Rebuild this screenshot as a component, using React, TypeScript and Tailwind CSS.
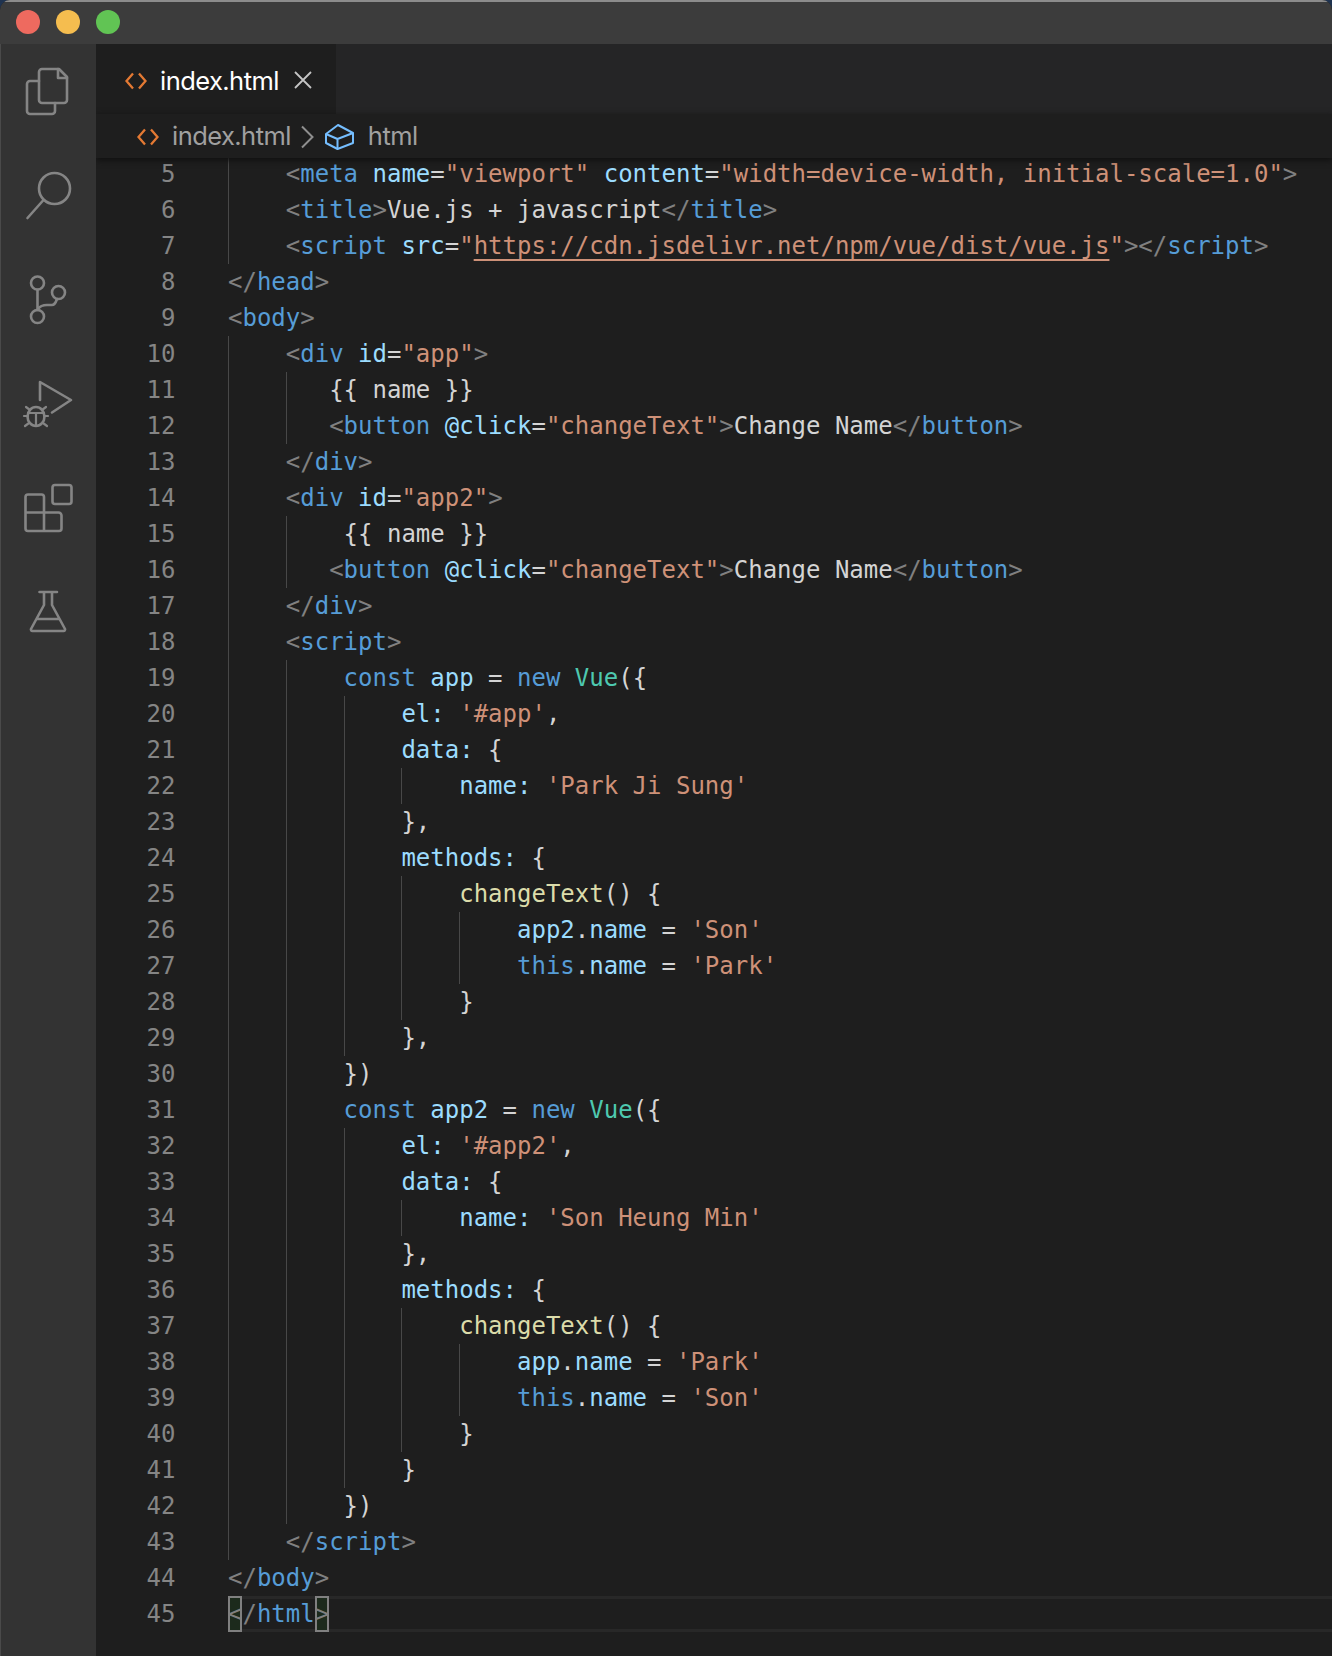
import React from "react";

const colors = {
  b: "text-[#808080]",
  t: "text-[#569cd6]",
  a: "text-[#9cdcfe]",
  s: "text-[#ce9178]",
  x: "text-[#d4d4d4]",
  f: "text-[#dcdcaa]",
  c: "text-[#4ec9b0]",
  u: "text-[#ce9178] underline decoration-2 underline-offset-[5px]",
  m: "text-[#808080] inline-block h-9 bg-[#1c2a1c] shadow-[inset_0_0_0_2px_#808080]",
};

type Kind = keyof typeof colors;
type Line = { n: number; guides: number[]; parts: [Kind, string][]; current?: boolean };

const lines: Line[] = [
  { n: 5, guides: [4], parts: [["b", "<"], ["t", "meta"], ["x", " "], ["a", "name"], ["x", "="], ["s", '"viewport"'], ["x", " "], ["a", "content"], ["x", "="], ["s", '"width=device-width, initial-scale=1.0"'], ["b", ">"]] },
  { n: 6, guides: [4], parts: [["b", "<"], ["t", "title"], ["b", ">"], ["x", "Vue.js + javascript"], ["b", "</"], ["t", "title"], ["b", ">"]] },
  { n: 7, guides: [4], parts: [["b", "<"], ["t", "script"], ["x", " "], ["a", "src"], ["x", "="], ["s", '"'], ["u", "https://cdn.jsdelivr.net/npm/vue/dist/vue.js"], ["s", '"'], ["b", "></"], ["t", "script"], ["b", ">"]] },
  { n: 8, guides: [], parts: [["b", "</"], ["t", "head"], ["b", ">"]] },
  { n: 9, guides: [], parts: [["b", "<"], ["t", "body"], ["b", ">"]] },
  { n: 10, guides: [4], parts: [["b", "<"], ["t", "div"], ["x", " "], ["a", "id"], ["x", "="], ["s", '"app"'], ["b", ">"]] },
  { n: 11, guides: [4, 3], parts: [["x", "{{ name }}"]] },
  { n: 12, guides: [4, 3], parts: [["b", "<"], ["t", "button"], ["x", " "], ["a", "@click"], ["x", "="], ["s", '"changeText"'], ["b", ">"], ["x", "Change Name"], ["b", "</"], ["t", "button"], ["b", ">"]] },
  { n: 13, guides: [4], parts: [["b", "</"], ["t", "div"], ["b", ">"]] },
  { n: 14, guides: [4], parts: [["b", "<"], ["t", "div"], ["x", " "], ["a", "id"], ["x", "="], ["s", '"app2"'], ["b", ">"]] },
  { n: 15, guides: [4, 4], parts: [["x", "{{ name }}"]] },
  { n: 16, guides: [4, 3], parts: [["b", "<"], ["t", "button"], ["x", " "], ["a", "@click"], ["x", "="], ["s", '"changeText"'], ["b", ">"], ["x", "Change Name"], ["b", "</"], ["t", "button"], ["b", ">"]] },
  { n: 17, guides: [4], parts: [["b", "</"], ["t", "div"], ["b", ">"]] },
  { n: 18, guides: [4], parts: [["b", "<"], ["t", "script"], ["b", ">"]] },
  { n: 19, guides: [4, 4], parts: [["t", "const"], ["x", " "], ["a", "app"], ["x", " = "], ["t", "new"], ["x", " "], ["c", "Vue"], ["x", "({"]] },
  { n: 20, guides: [4, 4, 4], parts: [["a", "el"], ["a", ":"], ["x", " "], ["s", "'#app'"], ["x", ","]] },
  { n: 21, guides: [4, 4, 4], parts: [["a", "data"], ["a", ":"], ["x", " {"]] },
  { n: 22, guides: [4, 4, 4, 4], parts: [["a", "name"], ["a", ":"], ["x", " "], ["s", "'Park Ji Sung'"]] },
  { n: 23, guides: [4, 4, 4], parts: [["x", "},"]] },
  { n: 24, guides: [4, 4, 4], parts: [["a", "methods"], ["a", ":"], ["x", " {"]] },
  { n: 25, guides: [4, 4, 4, 4], parts: [["f", "changeText"], ["x", "() {"]] },
  { n: 26, guides: [4, 4, 4, 4, 4], parts: [["a", "app2"], ["x", "."], ["a", "name"], ["x", " = "], ["s", "'Son'"]] },
  { n: 27, guides: [4, 4, 4, 4, 4], parts: [["t", "this"], ["x", "."], ["a", "name"], ["x", " = "], ["s", "'Park'"]] },
  { n: 28, guides: [4, 4, 4, 4], parts: [["x", "}"]] },
  { n: 29, guides: [4, 4, 4], parts: [["x", "},"]] },
  { n: 30, guides: [4, 4], parts: [["x", "})"]] },
  { n: 31, guides: [4, 4], parts: [["t", "const"], ["x", " "], ["a", "app2"], ["x", " = "], ["t", "new"], ["x", " "], ["c", "Vue"], ["x", "({"]] },
  { n: 32, guides: [4, 4, 4], parts: [["a", "el"], ["a", ":"], ["x", " "], ["s", "'#app2'"], ["x", ","]] },
  { n: 33, guides: [4, 4, 4], parts: [["a", "data"], ["a", ":"], ["x", " {"]] },
  { n: 34, guides: [4, 4, 4, 4], parts: [["a", "name"], ["a", ":"], ["x", " "], ["s", "'Son Heung Min'"]] },
  { n: 35, guides: [4, 4, 4], parts: [["x", "},"]] },
  { n: 36, guides: [4, 4, 4], parts: [["a", "methods"], ["a", ":"], ["x", " {"]] },
  { n: 37, guides: [4, 4, 4, 4], parts: [["f", "changeText"], ["x", "() {"]] },
  { n: 38, guides: [4, 4, 4, 4, 4], parts: [["a", "app"], ["x", "."], ["a", "name"], ["x", " = "], ["s", "'Park'"]] },
  { n: 39, guides: [4, 4, 4, 4, 4], parts: [["t", "this"], ["x", "."], ["a", "name"], ["x", " = "], ["s", "'Son'"]] },
  { n: 40, guides: [4, 4, 4, 4], parts: [["x", "}"]] },
  { n: 41, guides: [4, 4, 4], parts: [["x", "}"]] },
  { n: 42, guides: [4, 4], parts: [["x", "})"]] },
  { n: 43, guides: [4], parts: [["b", "</"], ["t", "script"], ["b", ">"]] },
  { n: 44, guides: [], parts: [["b", "</"], ["t", "body"], ["b", ">"]] },
  { n: 45, guides: [], current: true, parts: [["m", "<"], ["b", "/"], ["t", "html"], ["m", ">"]] },
];

function ActivityIcon({ top, children }: { top: number; children: React.ReactNode }) {
  return (
    <svg
      width="96"
      height="104"
      viewBox={`0 ${top} 96 104`}
      fill="none"
      stroke="#858585"
      strokeWidth="2.6"
      strokeLinejoin="round"
      strokeLinecap="round"
      className="block shrink-0"
    >
      {children}
    </svg>
  );
}

function ActivityBar() {
  return (
    <div className="flex w-24 shrink-0 flex-col bg-[#333333] border-l border-[#4a4a4a]">
      <div className="-ml-px">
        <ActivityIcon top={44}>
          <path d="M39 81H30a3 3 0 0 0-3 3v27a3 3 0 0 0 3 3h22a3 3 0 0 0 3-3v-8" />
          <path d="M42 69h17l8 8v23a3 3 0 0 1-3 3H42a3 3 0 0 1-3-3V72a3 3 0 0 1 3-3z" />
          <path d="M58 69v9h9" />
        </ActivityIcon>
        <ActivityIcon top={148}>
          <circle cx="54.500" cy="188.500" r="15.500" />
          <path d="M43.500 200L27.500 218" />
        </ActivityIcon>
        <ActivityIcon top={252}>
          <circle cx="37.500" cy="283" r="6.500" />
          <circle cx="58.500" cy="292.500" r="6.500" />
          <circle cx="37.500" cy="316.500" r="6.500" />
          <path d="M37.500 290V310" />
          <path d="M38 309c2-3 5-4 9-4h5c3 0 4-3 5-6" />
        </ActivityIcon>
        <ActivityIcon top={356}>
          <path d="M40 400V382L71 400L52 412.500" />
          <ellipse cx="36" cy="416.500" rx="8.500" ry="9.500" />
          <path d="M28 413h16M36 413v13M26 407l4 3M46 407l-4 3M24 416h4M44 416h4M25 426l4-3M47 426l-4-3" strokeWidth="2.200" />
        </ActivityIcon>
        <ActivityIcon top={460}>
          <rect x="52.500" y="485" width="19" height="19" rx="2.500" />
          <path d="M25.500 512.500V497a2.500 2.500 0 0 1 2.500-2.500h13.500a2.500 2.500 0 0 1 2.500 2.500v34M25.500 512.500h33a3 3 0 0 1 3 3v13a2.500 2.500 0 0 1-2.500 2.500H28a2.500 2.500 0 0 1-2.500-2.500z" />
        </ActivityIcon>
        <ActivityIcon top={564}>
          <path d="M39.500 592h17.500M44 592v13l-13 24a1.500 1.500 0 0 0 1.500 2h31a1.500 1.500 0 0 0 1.500-2l-13-24v-13M37 619h22" />
        </ActivityIcon>
      </div>
    </div>
  );
}

function HtmlIcon() {
  return (
    <svg width="22" height="18" viewBox="0 0 22 18" fill="none" stroke="#e37933" strokeWidth="2.300" className="shrink-0">
      <path d="M8 1.500L1.500 9L8 16.500M14 1.500L20.500 9L14 16.500" />
    </svg>
  );
}

function Chrome() {
  return (
    <>
      <div className="flex h-[70px] shrink-0 bg-[#252526]">
        <div className="flex w-60 items-center bg-[#1e1e1e] pl-[29px] pt-[4px]">
          <HtmlIcon />
          <span className="ml-[13px] font-['Inter',sans-serif] text-[25.5px] tracking-[-0.55px] text-white">index.html</span>
          <svg width="18" height="18" viewBox="0 0 18 18" fill="none" stroke="#c5c5c5" strokeWidth="1.800" className="ml-[15px] -translate-y-[1px] shrink-0">
            <path d="M1 1L17 17M17 1L1 17" />
          </svg>
        </div>
      </div>
      <div className="relative z-10 flex h-11 shrink-0 items-center bg-[#1e1e1e] pl-[41px] pt-[1px] shadow-[0_2px_6px_#0f0f0f]">
        <HtmlIcon />
        <span className="ml-[13px] font-['Inter',sans-serif] text-[25.5px] tracking-[-0.55px] text-[#a0a0a0]">index.html</span>
        <svg width="14" height="24" viewBox="0 0 14 24" fill="none" stroke="#8f8f8f" strokeWidth="2" className="ml-[9px] shrink-0">
          <path d="M2 1.500L12.500 12L2 22.500" />
        </svg>
        <svg width="30" height="26" viewBox="0 0 30 26" fill="none" stroke="#75beff" strokeWidth="2" strokeLinejoin="round" className="ml-[10px] shrink-0">
          <path d="M14 1L29 9V19L13.500 25L2 19V10z" />
          <path d="M2 10L13.500 15L29 9M13.500 15V25" />
        </svg>
        <span className="ml-[14px] font-['Inter',sans-serif] text-[25.5px] tracking-[-0.55px] text-[#a0a0a0]">html</span>
      </div>
    </>
  );
}

function CodeLine({ line }: { line: Line }) {
  return (
    <div className="flex h-9 shrink-0">
      <div className="w-[132px] shrink-0 pr-[52.5px] text-right text-[#858585]">{line.n}</div>
      <div className={`flex min-w-0 flex-1 ${line.current ? "shadow-[inset_0_3px_0_#282828,inset_0_-3px_0_#282828]" : ""}`}>
        {line.guides.map((g, i) => (
          <span key={i} className={`h-9 shrink-0 border-l-[1.5px] border-[#484848] ${g === 4 ? "w-[4ch]" : "w-[3ch]"}`} />
        ))}
        <span className="whitespace-pre">
          {line.parts.map(([kind, text], i) => (
            <span key={i} className={colors[kind]}>
              {text}
            </span>
          ))}
        </span>
      </div>
    </div>
  );
}

export default function App() {
  return (
    <div className="h-[1656px] w-[1332px] overflow-hidden bg-[#1f3350]">
      <div className="flex h-full flex-col overflow-hidden rounded-t-[10px] bg-[#1e1e1e]">
        <div className="flex h-11 shrink-0 items-center gap-4 border-t-2 border-[#8c8c8c] bg-[#3c3c3c] pb-[2px] pl-4">
          <span className="h-6 w-6 rounded-full bg-[#ee6a5f]" />
          <span className="h-6 w-6 rounded-full bg-[#f5bd4f]" />
          <span className="h-6 w-6 rounded-full bg-[#61c454]" />
        </div>
        <div className="flex min-h-0 flex-1">
          <ActivityBar />
          <div className="flex min-w-0 flex-1 flex-col overflow-hidden">
            <Chrome />
            <div className="-mt-[2px] flex flex-col font-['DejaVu_Sans_Mono',monospace] text-[24px] leading-9">
              {lines.map((line) => (
                <CodeLine key={line.n} line={line} />
              ))}
            </div>
          </div>
        </div>
      </div>
    </div>
  );
}
